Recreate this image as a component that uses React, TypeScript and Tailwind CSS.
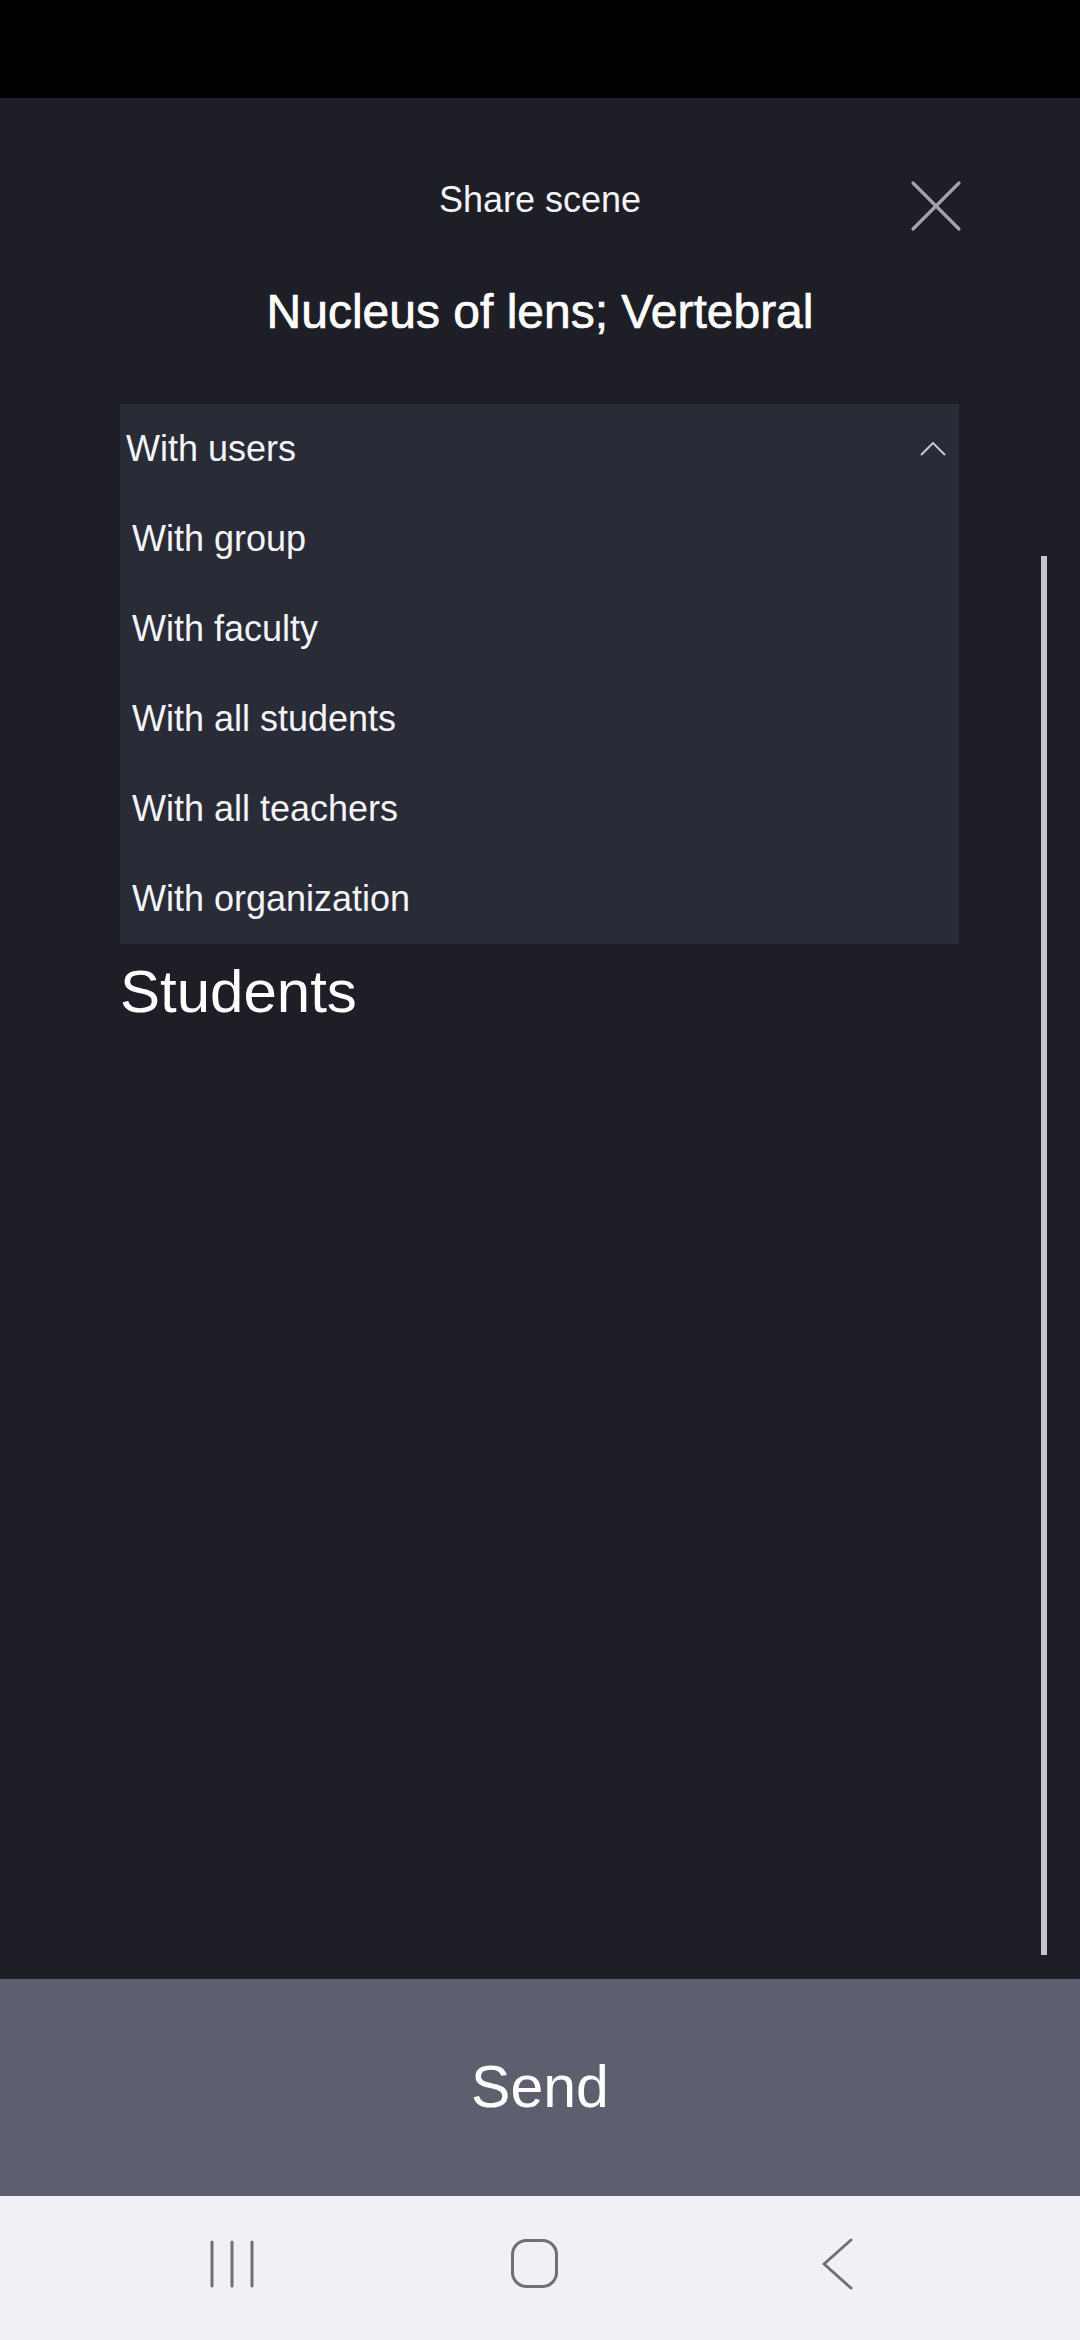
import React from "react";

const font = { fontFamily: '"Liberation Sans", Arial, sans-serif' };

export default function App() {
  const options = ["With group", "With faculty", "With all students", "With all teachers", "With organization"];
  return (
    <div className="w-[1080px] h-[2340px] flex flex-col overflow-hidden" style={font}>
      <div className="h-[98px] bg-black shrink-0" />
      <div className="relative flex-1 bg-[#1e1e26] flex flex-col">
        <div className="mt-[77px] grid grid-cols-[1fr_auto_1fr] px-[118px] items-start">
          <div />
          <div className="text-[36px] leading-[50px] text-[#f4f4f8]">Share scene</div>
          <div className="flex justify-end">
            <svg width="52" height="52" viewBox="0 0 52 52" className="mt-[5px]">
              <path d="M3 3 L49 49 M49 3 L3 49" stroke="#a3a3ab" strokeWidth="3.2" strokeLinecap="round" fill="none" />
            </svg>
          </div>
        </div>
        <div className="mt-[50px] text-center text-[48px] leading-[60px] text-white [-webkit-text-stroke:0.7px_#ffffff]">
          Nucleus of lens; Vertebral
        </div>
        <div className="mt-[62px] ml-[120px] w-[839px] bg-[#292b36] flex flex-col">
          <div className="h-[90px] flex items-center justify-between pl-[6px] pr-[13px]">
            <span className="text-[36px] text-[#f4f4f8]">With users</span>
            <svg width="26" height="14" viewBox="0 0 26 14">
              <path d="M1 13 L13 1 L25 13" stroke="#c8c8d2" strokeWidth="2" fill="none" />
            </svg>
          </div>
          {options.map((o) => (
            <div key={o} className="h-[90px] flex items-center pl-[12px]">
              <span className="text-[36px] text-[#f4f4f8]">{o}</span>
            </div>
          ))}
        </div>
        <div className="mt-[13px] ml-[120px] text-[60px] leading-[70px] text-white">Students</div>
        <div className="absolute left-[1041px] top-[458px] w-[6px] h-[1399px] bg-[#c4c4c9]" />
      </div>
      <div className="h-[217px] shrink-0 bg-[#5e5f6e] flex items-center justify-center">
        <span className="text-[59px] text-white">Send</span>
      </div>
      <div className="h-[144px] shrink-0 bg-[#f2f0f5] grid grid-cols-[303px_303px_303px] pl-[80px] pb-[8px] items-center">
        <div className="flex justify-center">
          <svg width="48" height="50" viewBox="0 0 48 50">
            <path d="M4 3 V47 M24 3 V47 M44 3 V47" stroke="#707074" strokeWidth="3" strokeLinecap="round" fill="none" />
          </svg>
        </div>
        <div className="flex justify-center">
          <svg width="50" height="52" viewBox="0 0 50 52">
            <rect x="2.5" y="2.5" width="44" height="46" rx="14" ry="14" stroke="#707074" strokeWidth="3" fill="none" />
          </svg>
        </div>
        <div className="flex justify-center">
          <svg width="34" height="52" viewBox="0 0 34 52">
            <path d="M30 2 L3 26 L30 50" stroke="#707074" strokeWidth="3" strokeLinecap="round" strokeLinejoin="round" fill="none" />
          </svg>
        </div>
      </div>
    </div>
  );
}
